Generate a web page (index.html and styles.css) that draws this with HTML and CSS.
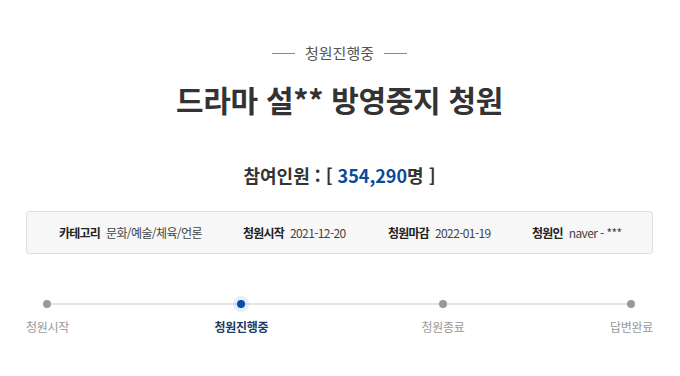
FILE: index.html
```html
<!DOCTYPE html>
<html lang="ko">
<head>
<meta charset="utf-8">
<link rel="stylesheet" href="styles.css">
</head>
<body>
<div class="page">
  <div class="status"><span class="dash"></span><span class="status-text">청원진행중</span><span class="dash"></span></div>
  <h1 class="title">드라마 설** 방영중지 청원</h1>
  <div class="count">참여인원 : [ <span class="num">354,290</span>명 ]</div>
  <div class="info">
    <div class="item"><b>카테고리</b><span>문화/예술/체육/언론</span></div>
    <div class="item"><b>청원시작</b><span>2021-12-20</span></div>
    <div class="item"><b>청원마감</b><span>2022-01-19</span></div>
    <div class="item"><b>청원인</b><span>naver - ***</span></div>
  </div>
  <div class="steps">
    <div class="line"></div>
    <div class="step"><span class="dot"></span><span class="label">청원시작</span></div>
    <div class="step active"><span class="dot"></span><span class="label">청원진행중</span></div>
    <div class="step"><span class="dot"></span><span class="label">청원종료</span></div>
    <div class="step"><span class="dot"></span><span class="label">답변완료</span></div>
  </div>
</div>
</body>
</html>
```

FILE: styles.css
```css
* { box-sizing: border-box; }
html, body { margin: 0; padding: 0; background: #fff; }
body { font-family: "Noto Sans CJK KR", "Noto Sans", sans-serif; color: #333; }
.page { width: 680px; padding: 0 27px 0 26px; }
.status {
  display: flex; justify-content: center; align-items: center;
  gap: 10px; padding-top: 42px; height: 64px;
  font-size: 15px; color: #555; line-height: 22px;
}
.dash { width: 23px; height: 1px; background: #888; }
.title {
  margin: 0; text-align: center; font-size: 30px; font-weight: 700;
  color: #333; line-height: 40px; padding-top: 15px; letter-spacing: -0.3px;
}
.count {
  text-align: center; font-size: 18px; font-weight: 700; color: #333;
  margin-top: 43px; line-height: 26px;
}
.count .num { color: #0b4a9c; }
.info {
  margin-top: 23px; height: 43px; border: 1px solid #dedede; border-radius: 3px;
  background: #f7f7f7; display: flex; align-items: center;
  padding-left: 32px; font-size: 12px; color: #444; letter-spacing: -0.6px;
}
.item { display: flex; gap: 6px; align-items: center; }
.item:nth-child(1) { width: 184px; }
.item:nth-child(2) { width: 145px; }
.item:nth-child(3) { width: 144px; }
.item b { font-weight: 700; color: #222; letter-spacing: -0.8px; }
.steps {
  position: relative; display: flex; justify-content: space-between;
  margin-top: 43px;
}
.line {
  position: absolute; left: 20px; right: 21px; top: 6px; height: 2px; background: #e4e4e4;
}
.step { position: relative; display: flex; flex-direction: column; align-items: center; }
.dot {
  width: 8px; height: 8px; border-radius: 50%; background: #999; margin: 3px 0;
}
.step.active .dot { background: #0b4aa6; box-shadow: 0 0 0 4px rgba(30, 120, 230, 0.12); }
.label { margin-top: 7px; font-size: 12px; color: #999; line-height: 18px; letter-spacing: -0.3px; }
.step.active { margin-right: 8px; }
.step.active .label { color: #1f3a66; font-weight: 700; }
```
